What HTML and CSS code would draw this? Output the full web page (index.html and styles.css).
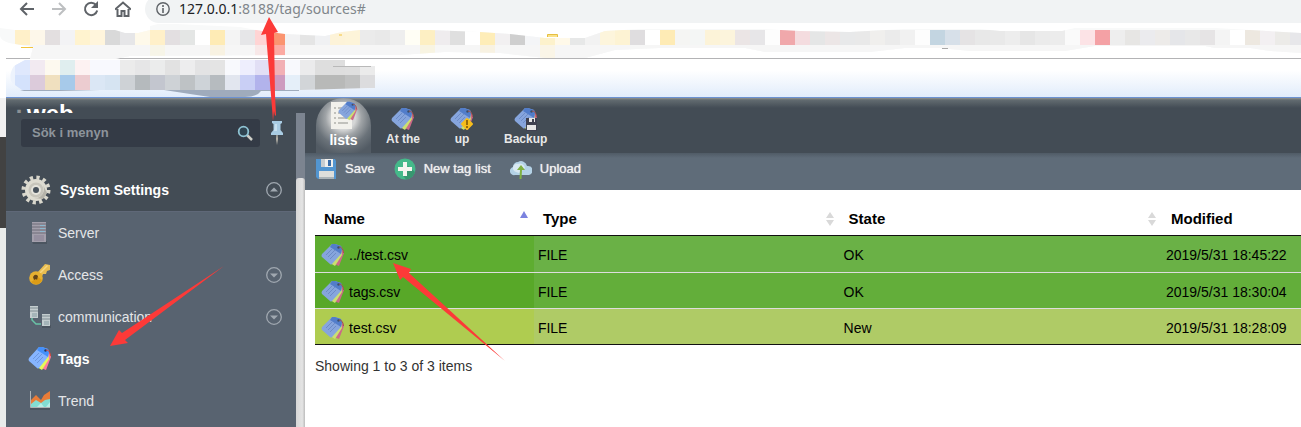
FILE: index.html
```html
<!DOCTYPE html>
<html lang="sv">
<head>
  <meta charset="utf-8" />
  <title>Tag lists</title>
  <link rel="stylesheet" href="styles.css">
</head>
<body>

<!-- Shared icons -->
<svg class="sprite" width="0" height="0" aria-hidden="true">
  <symbol id="tag" viewBox="0 0 24 24">
    <path d="M21 5l2 5-5 13-5-2z" fill="#cc6a88"/>
    <path d="M20 6l1 6-7 11-5-3z" fill="#cbe070"/>
    <path d="M11 1h3l6 2 1 3-1 5-9 10q-1 1-2 0l-8-7q-1-1 0-3z" fill="#86a5dd"/>
    <path d="M11 1h3l6 2 1 3-1 5-11-7z" fill="#527dca"/>
    <path d="M5 12l6-6M7 14l7-7M9 16l6-6" stroke="#6d8bc6" fill="none"/>
    <circle cx="17.500" cy="4.500" r="1.200" fill="#3c506a"/>
    <path d="M18 4q4 0 4.500 6" stroke="#a4544a" fill="none"/>
  </symbol>
  <symbol id="floppy" viewBox="0 0 22 22">
    <path d="M1 1h19l1 2v18H3l-2-2z" fill="#5295d0"/>
    <path d="M6 1h12v8H6z" fill="#f0f0ee"/>
    <path d="M6 1h4v8H6z" fill="#c8cdd0"/>
    <path d="M13 2h3v6h-3z" fill="#3a6da8"/>
    <path d="M4 13h15v8H4z" fill="#dddedb"/>
    <path d="M4 19h15v2H4z" fill="#aab3b8"/>
  </symbol>
  <symbol id="down" viewBox="0 0 16 16">
    <circle cx="8" cy="8" r="7.300" fill="none" stroke="#a0a8b0" stroke-width="1.300"/>
    <path d="M4 6.500h8L8 10.500z" fill="#a0a8b0"/>
  </symbol>
  <symbol id="up" viewBox="0 0 16 16">
    <circle cx="8" cy="8" r="7.300" fill="none" stroke="#a0a8b0" stroke-width="1.300"/>
    <path d="M4 9.500h8L8 5.500z" fill="#a0a8b0"/>
  </symbol>
  <symbol id="sort" viewBox="0 0 8 16">
    <path d="M0 7l4-6 4 6zM0 9h8l-4 6z" fill="#d9d9d9"/>
  </symbol>
  <symbol id="sortAsc" viewBox="0 0 8 16">
    <path d="M0 7l4-7 4 7z" fill="#7b82df"/>
  </symbol>
</svg>

<!-- BROWSER BAR -->
<div class="browser">
  <div class="toolbar">
    <svg class="nav-icon" viewBox="0 0 16 16"><path d="M15 8H2M8 2L2 8l6 6" stroke="#5f6368"/></svg>
    <svg class="nav-icon" viewBox="0 0 16 16"><path d="M1 8h13M8 2l6 6-6 6" stroke="#bdbfc1"/></svg>
    <svg class="nav-icon" viewBox="0 0 16 16"><path d="M13 4A6.200 6.200 0 1 0 14.200 9.500" stroke="#5f6368"/><path d="M15 0v7H8z" fill="#5f6368"/></svg>
    <svg class="nav-icon" viewBox="0 0 16 16"><path d="M0 8.500L8 1.500l8 7M2.500 8v7h4v-5h3v5h4V8" stroke="#5f6368"/></svg>
    <div class="address">
      <svg class="info" viewBox="0 0 14 14"><circle cx="7" cy="7" r="6.200" fill="none" stroke="#5f6368" stroke-width="1.400"/><path d="M7 6v5M7 3v2" stroke="#5f6368" stroke-width="1.600"/></svg>
      <span class="url"><span class="host">127.0.0.1</span>:8188/tag/sources#</span>
    </div>
  </div>
  <div class="bookmarks"></div>
  <div class="tabstrip"></div>
  <svg class="mosaic" id="mosaic" aria-hidden="true">
    <clipPath id="upper">
      <path d="M0 28L15 30H115L125 33H138L150 30 150 26 158 24H176L240 27 262 31 285 34 325 36 342 32 360 30H430L480 32 510 34 545 38H585L605 31 640 29H760L800 31 850 32 885 30 905 29H980L1000 31H1062L1075 28H1215L1250 30 1301 33V53L1270 51 1250 48H1215L1205 46H1095L1065 51H970L940 48H905L870 52H765L745 48H660L615 50 585 58H545L500 53 445 52 400 55H300L130 56 115 59 30 59 33 47 15 44Q0 42 0 35z"/>
    </clipPath>
    <clipPath id="lower">
      <path d="M25 60H345V66H375V88H368L300 90H98L85 90H22L12 83Q8 75 14 66z"/>
    </clipPath>
    <g id="upperCells" clip-path="url(#upper)"></g>
    <path d="M20 90H299V91H261Q257 97 245 97H210L190 94 164 90H100L60 91H24z" fill="#9fabbc"/>
    <g id="lowerCells" clip-path="url(#lower)"></g>
    <path d="M21 47.500h12M339 35h3" stroke="#f2c43d"/>
    <path d="M547.500 37v-2.500h10V37" fill="#fae28a" stroke="#e6bf41"/>
    <path d="M333 66.500h38" stroke="#b9b9b9"/>
    <path d="M942 48.500h6" stroke="#a8a8a8"/>
  </svg>
</div>

<div class="window">
  <div class="behind"></div>
  <div class="app">

    <!-- LEFT MENU -->
    <div class="sidebar">
      <div class="logo"><span class="dim">:</span>web</div>
      <div class="sidebar-body">
        <div class="menu">
          <div class="search-row">
            <label class="search">
              <input type="text" placeholder="Sök i menyn" aria-label="Sök i menyn">
              <svg class="lens" viewBox="0 0 16 16"><path d="M10 10l5 5" stroke="#cfcfc8" stroke-width="2.500"/><circle cx="6.500" cy="6.500" r="4.800" fill="#2f4350" stroke="#8fc3d3" stroke-width="1.800"/></svg>
            </label>
            <svg class="pin" viewBox="0 0 12 24"><path d="M5.500 13h1l.5 5-1 6-1-6z" fill="#b9b5ab"/><path d="M1 0h10v2L9.500 3v6l2.500 3v2H0v-2l2.500-3V3L1 2z" fill="#a9cce3"/><path d="M4 3h2v7H3z" fill="#c8e0ef"/></svg>
          </div>
          <a class="section" href="#">
            <svg class="gear" viewBox="0 0 30 30">
              <circle cx="15" cy="15" r="12.500" fill="none" stroke="#d9d7cc" stroke-width="4" stroke-dasharray="3.200 3.345"/>
              <circle cx="15" cy="15" r="11" fill="#dedcd1"/>
              <path d="M15 15m7-5a9 9 0 0 1-9 13l9 1 4-6z" fill="#b5b3a9"/>
              <circle cx="15" cy="15" r="7.500" fill="#c7c5bb"/>
              <circle cx="15" cy="15" r="5" fill="#e5e4dc"/>
              <circle cx="15" cy="15" r="3" fill="#48525c"/>
            </svg>
            <span>System Settings</span>
            <svg class="toggle"><use href="#up"/></svg>
          </a>
          <div class="items">
            <a class="item" href="#">
              <svg class="item-icon" viewBox="0 0 24 24"><path d="M4 20h15v3H5z" fill="#4b5560"/><path d="M4 1h14v20H4z" fill="#a39fab"/><path d="M4 3h14M4 6h14M4 9h14M4 12h14" stroke="#6f6d78"/><path d="M12 4.500h5M12 7.500h5M12 10.500h5" stroke="#8bb8cf"/><path d="M6 14h10v6H6z" fill="#958f9f"/></svg>
              <span>Server</span>
            </a>
            <a class="item" href="#">
              <svg class="item-icon" viewBox="0 0 24 24"><path d="M9 10L17 1l5 1v5l-3 1-1 3h-3l-2 5z" fill="#e8bd52"/><path d="M11 10l8-8 1 1-8 8z" fill="#f6d77e"/><circle cx="8" cy="15" r="6.800" fill="#e6b030"/><path d="M3 19a6.500 6.500 0 0 0 11-2l-4-3z" fill="#dc9c16"/><path d="M5 14q2-4 5-1l-1 4-1-1-2 1z" fill="#624318"/></svg>
              <span>Access</span>
              <svg class="toggle"><use href="#down"/></svg>
            </a>
            <a class="item" href="#">
              <svg class="item-icon" viewBox="0 0 24 24"><path d="M4 13v2l4 4h5" fill="none" stroke="#69c3a6" stroke-width="1.500"/><path d="M14 20h9v3h-9z" fill="#4b5560"/><path d="M2 1h8v12H2zM14 9h8v12h-8z" fill="#c4cdcf"/><path d="M2 3h8M2 6h8M14 11h8M14 14h8" stroke="#7f8c92"/><path d="M4 8h5v4H4zM16 16h5v4h-5z" fill="#a5b5b9"/></svg>
              <span>communication</span>
              <svg class="toggle"><use href="#down"/></svg>
            </a>
            <a class="item current" href="#">
              <svg class="item-icon" viewBox="0 0 24 24"><path d="M21 5l2 5-5 13-5-2z" fill="#ff7a9b"/><path d="M20 6l1 6-7 11-5-3z" fill="#e5fa58"/><path d="M11 0h3l6 2 1 3-1 5-9 11q-1 1-2 0l-8-7q-1-1 0-3z" fill="#86b5ff"/><path d="M11 0h3l6 2 1 3-1 5-11-7z" fill="#4590fa"/><path d="M5 12l6-6M7 14l7-7M9 16l6-6" stroke="#6d97df" fill="none"/><circle cx="17.500" cy="3.500" r="1.200" fill="#263b59"/><path d="M18 3q4 0 4.500 6" stroke="#e14636" fill="none"/></svg>
              <span>Tags</span>
            </a>
            <a class="item" href="#">
              <svg class="item-icon" viewBox="0 0 24 24"><path d="M2 19h20v2H2z" fill="#4b5560"/><path d="M3 18V11l5-5 5 5 3-5 6-4v16z" fill="#e97c38"/><path d="M3 18v-3l5-4 5 3 4-3 5-1v8z" fill="#83ddd2"/><path d="M9 18l4-4 3 4zM18 18l4-5v5z" fill="#b5eee6"/><path d="M2.500 2v16.500H22" stroke="#b0b3b5" fill="none"/></svg>
              <span>Trend</span>
            </a>
          </div>
        </div>
        <div class="track"><div class="thumb"></div></div>
      </div>
    </div>

    <!-- CONTENT -->
    <div class="content">
      <div class="tabs">
        <a class="tab selected" href="#">
          <svg class="list-icon" viewBox="0 0 28 28"><path d="M1 1h17l4 3v24H1z" fill="#f2f1ec"/><path d="M4 7h2M8 7h10M4 12h2M8 12h10M4 17h2M8 17h10M4 22h2M8 22h10" stroke="#b1b1ac" stroke-width="1.500"/><use href="#tag" x="8" y="0" width="20" height="20"/></svg>
          <span>lists</span>
        </a>
        <a class="tab" href="#">
          <svg class="tab-icon"><use href="#tag"/></svg>
          <span>At the</span>
        </a>
        <a class="tab" href="#">
          <svg class="tab-icon" viewBox="0 0 24 24"><use href="#tag"/><path d="M17 12l5 5-5 5-5-5z" fill="#f6bd1c" stroke="#f6bd1c" stroke-width="2" stroke-linejoin="round"/><path d="M17 13v5M17 19v2" stroke="#7a5206" stroke-width="1.500"/></svg>
          <span>up</span>
        </a>
        <a class="tab" href="#">
          <svg class="tab-icon" viewBox="0 0 24 24"><use href="#tag"/><path d="M12 11h11v13H12z" fill="#3f4150"/><path d="M15 11h6v4h-6zM13 18h9v5h-9z" fill="#e6e6e6"/><path d="M18 12h2v3h-2z" fill="#3f4150"/></svg>
          <span>Backup</span>
        </a>
      </div>

      <div class="actions">
        <button class="action" type="button">
          <svg class="action-icon"><use href="#floppy"/></svg>
          <span>Save</span>
        </button>
        <button class="action" type="button">
          <svg class="action-icon" viewBox="0 0 22 22"><circle cx="11" cy="11" r="10.500" fill="#45b98a"/><path d="M14 8l7 6a10.500 10.500 0 0 1-9 7.500l-3-4z" fill="#389770"/><path d="M9 4h4v5h5v4h-5v5H9v-5H4V9h5z" fill="#f5f5ef"/></svg>
          <span>New tag list</span>
        </button>
        <button class="action" type="button">
          <svg class="action-icon" viewBox="0 0 22 22"><path d="M5 17a4 4 0 0 1-2-8 5 5 0 0 1 5-5 6 6 0 0 1 9 4 4.500 4.500 0 0 1 2 9z" fill="#b4d2e6"/><path d="M6 14a4 4 0 0 1 2-8 5 5 0 0 1 7 4l-6 5z" fill="#d8e8f1"/><path d="M9.500 21l.5-9H7l4-5 4 5h-3l-.5 9z" fill="#7fb142"/></svg>
          <span>Upload</span>
        </button>
      </div>

      <div class="panel">
        <table class="sources">
          <thead>
            <tr>
              <th class="col-name"><span class="head">Name <svg class="sort"><use href="#sortAsc"/></svg></span></th>
              <th class="col-type"><span class="head">Type <svg class="sort"><use href="#sort"/></svg></span></th>
              <th class="col-state"><span class="head">State <svg class="sort"><use href="#sort"/></svg></span></th>
              <th>Modified</th>
            </tr>
          </thead>
          <tbody>
            <tr class="ok odd">
              <td><span class="file"><svg class="file-icon"><use href="#tag"/></svg>../test.csv</span></td>
              <td>FILE</td>
              <td>OK</td>
              <td>2019/5/31 18:45:22</td>
            </tr>
            <tr class="ok">
              <td><span class="file"><svg class="file-icon"><use href="#tag"/></svg>tags.csv</span></td>
              <td>FILE</td>
              <td>OK</td>
              <td>2019/5/31 18:30:04</td>
            </tr>
            <tr class="new">
              <td><span class="file"><svg class="file-icon"><use href="#tag"/></svg>test.csv</span></td>
              <td>FILE</td>
              <td>New</td>
              <td>2019/5/31 18:28:09</td>
            </tr>
          </tbody>
        </table>
        <p class="summary">Showing 1 to 3 of 3 items</p>
      </div>
    </div>
  </div>
</div>

<!-- Red arrows over the page -->
<svg class="arrows" aria-hidden="true">
  <path d="M269 17l9 15-4 1 1 62 1 20-1 1-1-5-1 10-2-26-5-61-5 1z"/>
  <path d="M110 346l9-16 3 3L224 266 125 340l3 3z"/>
  <path d="M393 263l18 6-2 4 96 88L403 277l-3 3z"/>
</svg>

<script>
  /*********************************************************
   * Pixelated strips in the browser bar, 15px per cell
   *********************************************************/
  const CELL = 15;
  const rowTop = 'fff0c9 fdf7ea e3dfe0 f3f3f5 fff3cf fff5dc d9d9d9 e6e6e8 fef9ea fff0c9 e3dfe1 e4e6e5 ffffff feebb5 f4f4f4 e6e6e8 ffd4d4 fb9470 f2f2f3 e5e5e5 f0f1f3 fdf3d8 fdf4d9 ebebeb e9e9e9 eeeeee fffef5 fdefc3 efecee dfdfdf ffffff feedb8 f2f0f1 cfcfcf f4f5f7 fdf2cc fff9e9 e7e8e8 f2f2f2 fdf5dc fdf3d3 dfdddf ffffff feebb5 f5f5f3 f4f6f5 fcf3d8 fcf4dc ebe5e5 e7e6e8 fdfdfd f0a8ab f4dcdf e5e6e6 ece6e6 e8e9ea e9e9e9 f0efed ebebeb f1f1f1 fdfdfd c3d5e1 d7e0e9 e5e3e4 e8e8e8 e9e9e9 ededed e6e6e6 ebebeb ececec fafafa fce3e6 f4a1a5 eeeeee e7e6e4 ebebee edebe9 e5e6e9 e8e8e8 e6e4e5 f4f4f4 ffffff ede8e0 f3f0f2 ecebe8 e7e7ea'.split(' ');
  const rowSecond = {9: 'f7f5e8', 13: 'f8f2e2', 16: 'f8e8e8', 17: 'fcaaa2', 27: 'f8f4e2', 31: 'f8f2e2', 35: 'faf5e7'};
  const rowThird = 'dfe8fd f2eaf1 fdf9ef e0eeef fdf2f2 f8f9fe f8f9fe ebebeb e6e6e7 ebecec e2e2e2 ededee e3e3e4 e4e4e4 f8f9fd eeeefd e2dff5 f2b0b5 f8f9fd ebebec dedede dedede dfdfdf ebebeb'.split(' ');
  const rowFourth = 'd4e2fc dccbdb f0e0bf a7caea ecccd0 dbe7f5 d6e4f2 ced2d6 b5babd c3c6cf ced2d6 bec2c5 ced3d8 b6bbbf e2e6ef c9cff5 b2b3ec cd9bbf e5eff9 d2d5d8 b8b9b8 b8b9b8 c0c1c1 dcdcde'.split(' ');

  function addCell(group, x, y, width, height, color) {
    const rect = document.createElementNS('http://www.w3.org/2000/svg', 'rect');
    rect.setAttribute('x', x);
    rect.setAttribute('y', y);
    rect.setAttribute('width', width);
    rect.setAttribute('height', height);
    rect.setAttribute('fill', color);
    group.appendChild(rect);
  }

  const upper = document.getElementById('upperCells');
  const lower = document.getElementById('lowerCells');
  addCell(upper, 0, 24, 1320, 36, '#f8f9f9');
  addCell(lower, 0, 60, 400, 30, '#edf3fd');
  rowTop.forEach((color, i) => {
    addCell(upper, (i + 1) * CELL, 30, CELL, CELL, '#' + color);
    addCell(upper, (i + 1) * CELL, 45, CELL, CELL, '#' + (rowSecond[i] || 'f6f6f6'));
  });
  rowThird.forEach((color, i) => addCell(lower, (i + 1) * CELL, 60, CELL, CELL, '#' + color));
  rowFourth.forEach((color, i) => addCell(lower, (i + 1) * CELL, 75, CELL, CELL, '#' + color));
</script>
</body>
</html>
```

FILE: styles.css
```css
html, body {
  margin: 0;
  padding: 0;
  height: 100%;
  box-sizing: border-box;
}
*, *::before, *::after {
  box-sizing: inherit;
}
body {
  position: relative;
  display: flex;
  flex-direction: column;
  overflow: hidden;
  background: #fff;
  font-family: "Liberation Sans", Arial, sans-serif;
  font-size: 14px;
  line-height: 16px;
}
a {
  color: inherit;
  text-decoration: none;
}
svg {
  flex: none;
}
.sprite {
  position: absolute;
}

/* Browser bar */
.browser {
  position: relative; /* needed for the mosaic on top */
  flex: none;
}
.toolbar {
  display: flex;
  align-items: flex-end;
  gap: 16px;
  height: 23px;
  padding-left: 19px;
  overflow: hidden;
}
.nav-icon {
  width: 16px;
  height: 16px;
  margin-bottom: 6px;
  fill: none;
  stroke-width: 2;
}
.address {
  flex: 1;
  display: flex;
  align-items: center;
  gap: 9px;
  height: 28px;
  margin-left: -2px;
  padding-left: 11px;
  border-radius: 14px 0 0 14px;
  background: #f1f3f4;
}
.info {
  width: 14px;
  height: 14px;
}
.url {
  color: #80868b;
  font-family: "Noto Sans", "Open Sans", sans-serif;
  font-size: 14px;
}
.host {
  color: #202124;
}
.bookmarks {
  height: 36px;
  margin-left: 6px;
  border-bottom: 1px solid #b3b3b5;
}
.tabstrip {
  height: 39px;
  margin-left: 6px;
  border-bottom: 1px solid #6c92d2;
  background: linear-gradient(#fff 30%, #e1ecfb);
}
.mosaic {
  position: absolute;
  top: 0;
  left: 0;
  width: 100%;
  height: 98px;
}

/* Application */
.window {
  flex: 1;
  display: flex;
  min-height: 0;
}
.behind {
  flex: none;
  width: 6px;
  background: linear-gradient(#f1f1f1 39px, #424242 39px, #424242 130px, #e9eceb 130px);
}
.app {
  flex: 1;
  display: flex;
  min-width: 0;
  background: linear-gradient(#909290, #626b70 2px, #434c55 10px);
}

/* Left menu */
.sidebar {
  flex: none;
  display: flex;
  flex-direction: column;
  width: 299px;
  color: #e4e6e8;
}
.logo {
  height: 15px;
  padding: 4px 0 0 9px;
  overflow: hidden;
  color: #fff;
  font-size: 24px;
  font-weight: bold;
  line-height: 24px;
}
.dim {
  margin-right: 4px;
  color: #8b9094;
}
.sidebar-body {
  flex: 1;
  display: flex;
}
.menu {
  flex: 1;
  display: flex;
  flex-direction: column;
}
.search-row {
  display: flex;
  align-items: center;
  gap: 11px;
  padding: 6px 13px 0 15px;
}
.search {
  flex: 1;
  display: flex;
  align-items: center;
  height: 28px;
  padding: 0 7px 0 11px;
  border-radius: 3px;
  background: #343b46;
}
.search input {
  flex: 1;
  min-width: 0;
  padding: 0;
  border: 0;
  outline: 0;
  background: none;
  color: #fff;
  font: bold 13px/16px "Liberation Sans", Arial, sans-serif;
}
.search input::placeholder {
  color: #8d949b;
}
.lens {
  width: 16px;
  height: 16px;
}
.pin {
  width: 12px;
  height: 24px;
}
.section {
  display: flex;
  align-items: center;
  gap: 9px;
  height: 42px;
  margin: 22px 14px 0 15px;
  color: #fff;
  font-weight: bold;
}
.gear {
  width: 30px;
  height: 30px;
}
.toggle {
  width: 16px;
  height: 16px;
  margin-left: auto;
}
.items {
  flex: 1;
  border-top: 1px solid #5f6878;
  background: #586370;
}
.item {
  display: flex;
  align-items: center;
  gap: 6px;
  height: 42px;
  padding: 0 14px 0 22px;
}
.item-icon {
  width: 24px;
  height: 24px;
}
.current {
  color: #fff;
  font-weight: bold;
}
.track {
  width: 9px;
  padding-top: 65px;
  background: #7c8490;
}
.thumb {
  height: 100%;
  border-radius: 3px 3px 0 0;
  background: linear-gradient(90deg, #d6d6d6, #e4e4e4 70%, #bcbcbc);
}

/* Content */
.content {
  flex: 1;
  display: flex;
  flex-direction: column;
  min-width: 0;
}
.tabs {
  display: flex;
  gap: 30px;
  height: 55px;
  padding-left: 11px;
  color: #e8e8e8;
  font-size: 12px;
  font-weight: bold;
}
.tab {
  display: flex;
  flex-direction: column;
  align-items: center;
  padding-top: 9px;
}
.tab-icon {
  width: 24px;
  height: 24px;
}
.selected {
  width: 55px;
  height: 55px;
  margin-right: -15px;
  padding-top: 3px;
  border-radius: 28px 28px 0 0;
  background: radial-gradient(circle at 50% 36%, #d5d6d6 12px, #a0a4a7 18px, #6b737a 28px, #525b64 38px);
  color: #fff;
  font-size: 14px;
}
.list-icon {
  width: 28px;
  height: 28px;
  margin-bottom: 3px;
}
.actions {
  display: flex;
  gap: 19px;
  height: 37px;
  padding: 5px 0 0 10px;
  background: linear-gradient(#505b66, #5f6c79 5px);
}
.action {
  display: flex;
  align-items: center;
  gap: 8px;
  height: 22px;
  padding: 0;
  border: 0;
  background: none;
  color: #f0f0f0;
  font: 13px/16px "Liberation Sans", Arial, sans-serif;
  text-shadow: 0 0 1px #f0f0f0;
  cursor: pointer;
}
.action-icon {
  width: 22px;
  height: 22px;
}

/* Sources table */
.panel {
  flex: 1;
  padding: 10px 0 0 10px;
  background: #fff;
}
.sources {
  width: 100%;
  table-layout: fixed;
  border-spacing: 0;
  border-bottom: 1px solid #111;
}
.col-name {
  width: 22.2%;
}
.col-type {
  width: 31%;
}
.col-state {
  width: 32.7%;
}
th {
  height: 36px;
  padding: 2px 6px 0 9px;
  border-bottom: 1px solid #111;
  text-align: left;
  font-size: 15px;
}
.head {
  display: flex;
  align-items: center;
  justify-content: space-between;
}
.sort {
  width: 8px;
  height: 16px;
}
td {
  height: 36px;
  padding: 2px 4px 0;
  border-top: 1px solid #ddd;
  white-space: nowrap;
}
.odd td {
  border-top: 0;
}
.ok td {
  background: #63ae3a;
}
.ok td:first-child {
  background: #58a828;
}
.ok.odd td {
  background: #6ab146;
}
.ok.odd td:first-child {
  background: #5ead30;
}
.new td {
  background: #afcb66;
}
.new td:first-child {
  background: #afcc50;
}
.file {
  display: flex;
  align-items: center;
  gap: 4px;
  padding-left: 2px;
}
.file-icon {
  width: 24px;
  height: 24px;
}
.summary {
  margin: 13px 0 0;
  color: #333;
}

.arrows {
  position: absolute;
  top: 0;
  left: 0;
  width: 100%;
  height: 100%;
  fill: #fc3a38;
  pointer-events: none;
}
```
